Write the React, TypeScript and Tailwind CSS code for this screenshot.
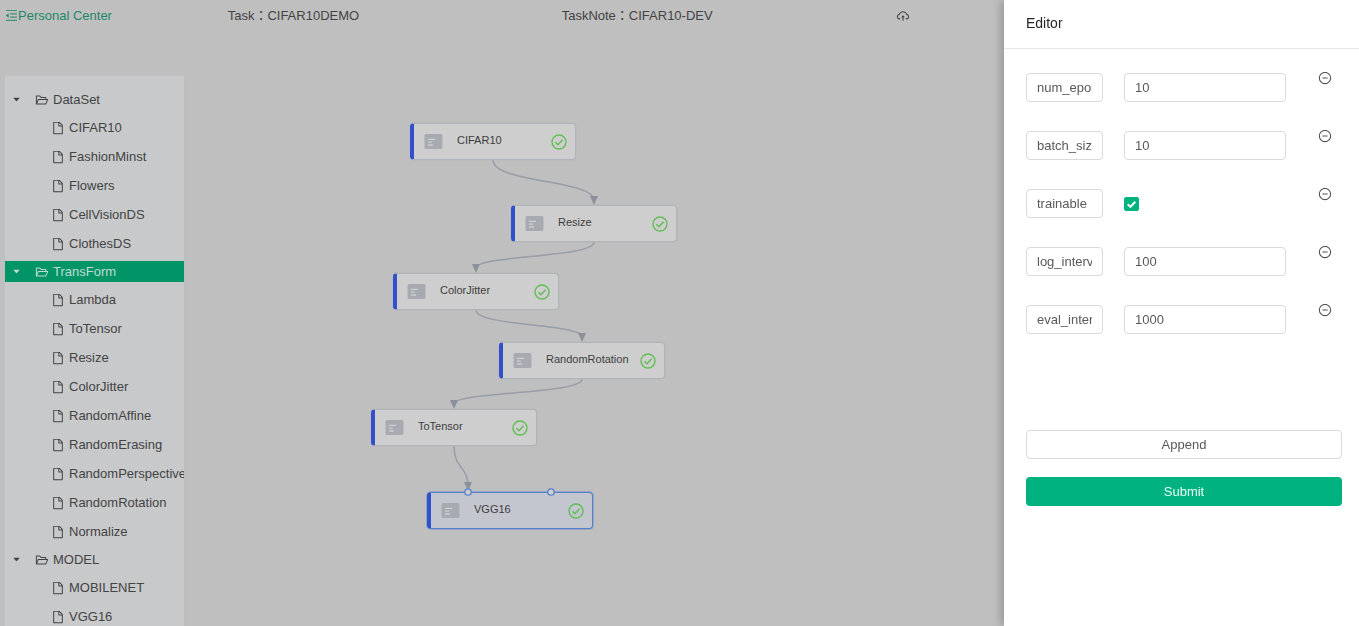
import React, { useState } from "react";
import {
  AiFillCaretDown,
  AiOutlineCloudUpload,
  AiOutlineFile,
  AiOutlineFolderOpen,
  AiOutlineMinusCircle,
} from "react-icons/ai";

type Group = { name: string; items: string[] };

const groups: Group[] = [
  { name: "DataSet", items: ["CIFAR10", "FashionMinst", "Flowers", "CellVisionDS", "ClothesDS"] },
  {
    name: "TransForm",
    items: [
      "Lambda",
      "ToTensor",
      "Resize",
      "ColorJitter",
      "RandomAffine",
      "RandomErasing",
      "RandomPerspective",
      "RandomRotation",
      "Normalize",
    ],
  },
  { name: "MODEL", items: ["MOBILENET", "VGG16"] },
];

type FlowNode = { name: string; x: number; y: number; selected?: boolean };

// Node positions are relative to the canvas origin.
const nodes: FlowNode[] = [
  { name: "CIFAR10", x: 225, y: 47 },
  { name: "Resize", x: 326, y: 129 },
  { name: "ColorJitter", x: 208, y: 197 },
  { name: "RandomRotation", x: 314, y: 266 },
  { name: "ToTensor", x: 186, y: 333 },
  { name: "VGG16", x: 242, y: 416, selected: true },
];

const NODE_W = 166;
const NODE_H = 37;

const edges = nodes.slice(1).map((to, i) => {
  const from = nodes[i];
  return {
    sx: from.x + NODE_W / 2,
    sy: from.y + NODE_H,
    tx: to.selected ? to.x + 41 : to.x + NODE_W / 2,
    ty: to.selected ? to.y - 1 : to.y,
  };
});

type Param = { name: string; value: string | boolean };

const initialParams: Param[] = [
  { name: "num_epochs", value: "10" },
  { name: "batch_size", value: "10" },
  { name: "trainable", value: true },
  { name: "log_interval", value: "100" },
  { name: "eval_interval", value: "1000" },
];

function MenuFoldIcon() {
  return (
    <svg width="13" height="13" viewBox="0 0 13 13" className="shrink-0">
      <path d="M1 1.500h11M5 4.800h7M5 8.100h7M1 11.400h11" stroke="currentColor" strokeWidth="1.200" opacity="0.8" />
      <path d="M0.800 6.500L3.600 4.300v4.400z" fill="currentColor" />
    </svg>
  );
}

function Header() {
  return (
    <header className="grid h-[31px] shrink-0 grid-cols-[repeat(24,minmax(0,1fr))] items-center pr-[18px] pl-[5px] whitespace-nowrap">
      <a href="#personal" className="col-span-4 flex items-center text-[#22876a]">
        <MenuFoldIcon />
        Personal Center
      </a>
      <div className="col-span-6">Task：CIFAR10DEMO</div>
      <div className="col-span-6">TaskNote：CIFAR10-DEV</div>
      <div className="col-span-6 flex">
        <button type="button" aria-label="Upload">
          <AiOutlineCloudUpload size={14} />
        </button>
      </div>
    </header>
  );
}

function Sidebar({ active }: { active: string }) {
  return (
    <nav className="w-[180px] shrink-0 overflow-hidden border-r border-[#bdbdbd] bg-[#c8c9cb] pt-[10px]">
      {groups.map((g) => (
        <div key={g.name}>
          <div className="flex h-[27px] items-center">
            <button
              type="button"
              className={
                g.name === active
                  ? "flex h-[21px] w-full items-center bg-[#009466] pl-[7px] text-[#c0dcd2]"
                  : "flex h-[21px] w-full items-center pl-[7px]"
              }
            >
              <AiFillCaretDown size={9} />
              <AiOutlineFolderOpen size={14} className="mr-1 ml-[14px]" />
              {g.name}
            </button>
          </div>
          <ul>
            {g.items.map((item) => (
              <li key={item} className="flex h-[29px] items-center pl-[46px] whitespace-nowrap">
                <AiOutlineFile size={14} className="mr-1 shrink-0" />
                {item}
              </li>
            ))}
          </ul>
        </div>
      ))}
    </nav>
  );
}

function NodeCard({ node }: { node: FlowNode }) {
  return (
    <div
      className={
        node.selected
          ? "absolute flex h-[37px] w-[166px] items-center rounded-[4px] border border-l-4 border-[#5580cb] border-l-[#3350cc] bg-[#c3c6cf] pr-[8px] pl-[10px] ring-1 ring-[#5580cb]/40"
          : "absolute flex h-[37px] w-[166px] items-center rounded-[4px] border border-l-4 border-[#b1b4b9] border-l-[#3350cc] bg-[#cecece] pr-[8px] pl-[10px] ring-1 ring-[#b1b4b9]/30"
      }
      style={{ left: node.x, top: node.y }}
    >
      <svg width="19" height="15" viewBox="0 0 19 15" className="shrink-0">
        <rect x="0.5" y="0" width="18" height="15" rx="1.500" fill="#a7abb1" />
        <path d="M4 5.400h7M4 8.200h4M4 11h5" stroke="#cccdd0" strokeWidth="1.300" />
      </svg>
      <span className="ml-[14px] flex-1 pb-[3px] text-[11px] text-[#3d3d3d]">{node.name}</span>
      <svg width="16" height="16" viewBox="0 0 16 16" fill="none" stroke="#62bd55" className="shrink-0">
        <circle cx="8" cy="8" r="7" strokeWidth="1.400" />
        <path d="M4.400 8.200l2.500 2.500 4.800-5" strokeWidth="1.500" />
      </svg>
    </div>
  );
}

function Canvas() {
  return (
    <main className="relative flex-1 overflow-hidden">
      <svg className="absolute inset-0 h-full w-full">
        {edges.map(({ sx, sy, tx, ty }) => {
          const end = ty - 5;
          const mid = (sy + end) / 2;
          return (
            <g key={`${sx}-${sy}`}>
              <path
                d={`M${sx} ${sy}C${sx} ${mid + 3} ${tx} ${mid} ${tx} ${end}`}
                fill="none"
                stroke="#989da6"
                strokeWidth="1.500"
              />
              <path d={`M${tx - 4} ${ty - 9}h8l-4 9z`} fill="#8b919b" />
            </g>
          );
        })}
      </svg>
      {nodes.map((n) => (
        <NodeCard key={n.name} node={n} />
      ))}
      <svg className="absolute inset-0 h-full w-full">
        {[283, 366].map((cx) => (
          <circle key={cx} cx={cx} cy="416" r="3.200" fill="#cfcfcf" stroke="#5580cb" strokeWidth="1.300" />
        ))}
      </svg>
    </main>
  );
}

const fieldClass =
  "h-[29px] w-full min-w-0 rounded-[4px] border border-[#d9d9d9] bg-white px-[10px] text-[#595959] outline-none";

function ParamRow({ param, onRemove }: { param: Param; onRemove: () => void }) {
  return (
    <div className="grid grid-cols-[77px_1fr_35px] gap-x-[21px]">
      <input aria-label="Parameter name" defaultValue={param.name} className={fieldClass} />
      {typeof param.value === "boolean" ? (
        <label className="flex h-[29px] items-center">
          <span className="relative flex">
            <input
              type="checkbox"
              aria-label={param.name}
              defaultChecked={param.value}
              className="peer h-[14px] w-[15px] appearance-none rounded-[2px] border border-[#d9d9d9] checked:border-[#00b27f] checked:bg-[#00b27f]"
            />
            <svg
              viewBox="0 0 15 14"
              className="pointer-events-none absolute inset-0 hidden h-full w-full peer-checked:block"
            >
              <path d="M3.700 7.200l2.700 2.700 4.900-5.200" fill="none" stroke="#fff" strokeWidth="2" />
            </svg>
          </span>
        </label>
      ) : (
        <input aria-label={param.name} defaultValue={param.value} className={fieldClass} />
      )}
      <button
        type="button"
        aria-label={`Remove ${param.name}`}
        onClick={onRemove}
        className="flex h-[10px] items-center justify-center text-[#4f4f4f]"
      >
        <AiOutlineMinusCircle size={14} className="shrink-0" />
      </button>
    </div>
  );
}

function Editor() {
  const [params, setParams] = useState(initialParams);
  return (
    <aside className="fixed inset-y-0 right-0 w-[355px] bg-white text-[#595959] shadow-[-4px_0_8px_rgba(0,0,0,0.18)]">
      <h2 className="flex h-[49px] items-center border-b border-[#e8e8e8] px-[22px] pb-[2px] text-[14px] text-[#262626]">
        Editor
      </h2>
      <form className="pt-[24px] pr-[17px] pl-[22px]" onSubmit={(e) => e.preventDefault()}>
        <div className="flex min-h-[357px] flex-col gap-[29px]">
          {params.map((p) => (
            <ParamRow
              key={p.name}
              param={p}
              onRemove={() => setParams(params.filter((q) => q.name !== p.name))}
            />
          ))}
        </div>
        <div className="flex flex-col gap-[18px]">
          <button type="button" className="h-[29px] rounded-[4px] border border-[#d9d9d9] bg-white">
            Append
          </button>
          <button type="submit" className="h-[29px] rounded-[4px] bg-[#00b27f] text-[#e9fff8]">
            Submit
          </button>
        </div>
      </form>
    </aside>
  );
}

export default function App() {
  return (
    <div className="flex h-screen flex-col overflow-hidden bg-[#bfbfbf] font-['Liberation_Sans','Noto_Sans_CJK_JP',sans-serif] text-[13px] text-[#434343]">
      <Header />
      <div className="flex min-h-0 flex-1 pt-[45px] pl-[5px]">
        <Sidebar active="TransForm" />
        <Canvas />
      </div>
      <Editor />
    </div>
  );
}
